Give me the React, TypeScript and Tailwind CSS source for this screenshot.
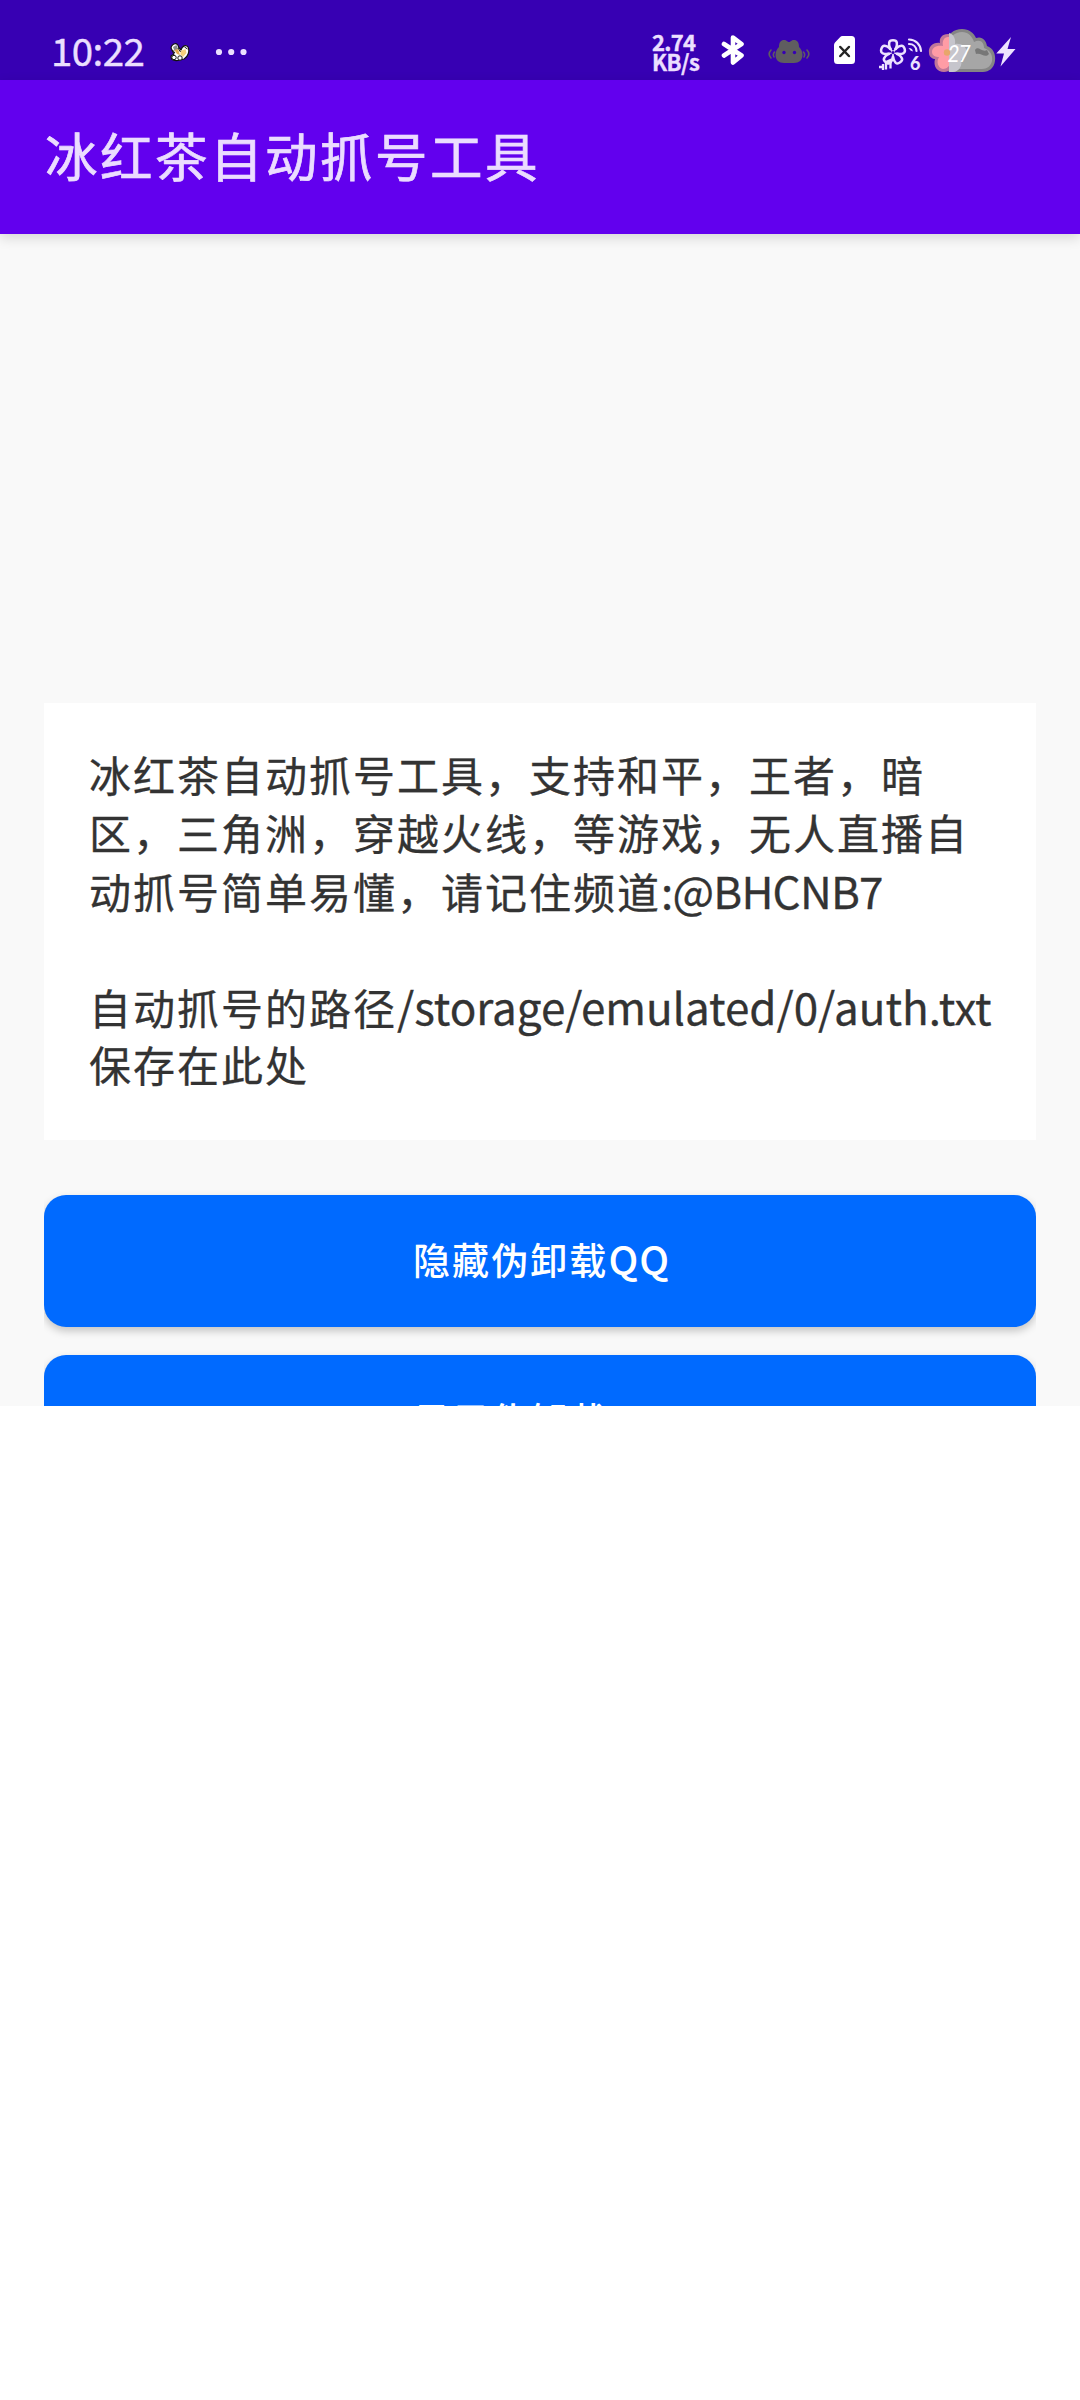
function NotificationIcon() {
  return (
    <svg width="20" height="20" viewBox="0 0 20 20" fill="none">
      <path
        d="M1 6C2 1 8 0 8.500 5L11 8C12 4 16 2 18 5C20 9 18 15 14 17L10 18C7 19 4 19 1.500 17L1 14L4 12Z"
        fill="#fff"
        stroke="#111"
        strokeWidth="1.2"
        strokeLinejoin="round"
      />
      <path d="M3 5L6.500 3L8 7L4.500 9Z" fill="#8b8b8b" />
      <path d="M4.500 8L8 7L10 13L7 12Z" fill="#e2a94f" />
      <path d="M10.500 9L15.500 7L16.500 11L13 15L10.500 12.500Z" fill="#f5cf7c" />
      <path d="M2.500 8L5 11M8 6L10.500 10M14.500 5L17.500 7" stroke="#171717" strokeWidth="1" />
      <circle cx="4" cy="15.5" r="2.2" fill="#fff" stroke="#171717" strokeWidth="1" />
      <circle cx="10" cy="16" r="2.2" fill="#fff" stroke="#171717" strokeWidth="1" />
    </svg>
  );
}

function DotsIcon() {
  return (
    <svg width="32" height="8" viewBox="0 0 32 8" fill="#ebdfff">
      <circle cx="4" cy="4" r="3.1" />
      <circle cx="16.2" cy="4" r="3.1" />
      <circle cx="28.5" cy="4" r="3.1" />
    </svg>
  );
}

function BluetoothIcon() {
  return (
    <svg width="24" height="32" viewBox="0 0 24 32" fill="none">
      <path
        d="M3 10L20.5 21.5L12 28.5V3.5L20.5 10L3 21.5"
        stroke="#fff"
        strokeWidth="4.6"
        strokeLinecap="round"
        strokeLinejoin="round"
      />
    </svg>
  );
}

function CatIcon() {
  return (
    <svg width="42" height="26" viewBox="0 0 42 26" fill="none">
      <path
        d="M11 8C11 3 13 1 16 1C19 1 19 3 21 3C23 3 23 1 26 1C29 1 31 3 31 8C33 10 34.5 12.5 34.5 16C34.5 21 31 24 26 24H16C11 24 7.5 21 7.5 16C7.5 12.5 9 10 11 8Z"
        fill="#5f5d60"
      />
      <circle cx="16" cy="13.5" r="1.7" fill="#3700b3" />
      <circle cx="26.5" cy="13.5" r="1.7" fill="#3700b3" />
      <path
        d="M3 11C.7 13.5 .7 16.5 3 19M6.5 13C5 14.5 5 16 6 18M39 11C41.3 13.5 41.3 16.5 39 19M35.5 13C37 14.5 37 16 36 18"
        stroke="#5f5d60"
        strokeWidth="1.6"
        strokeLinecap="round"
      />
    </svg>
  );
}

function SimIcon() {
  return (
    <svg width="21" height="28" viewBox="0 0 21 28" fill="none">
      <path d="M8.5 0H17.5Q21 0 21 3.5V24.5Q21 28 17.5 28H3.5Q0 28 0 24.5V9Q0 7.5 1 6.5L6 1.2Q7 0 8.5 0Z" fill="#fff" />
      <path d="M6.3 11L14.9 20M14.9 11L6.3 20" stroke="#242424" strokeWidth="2.5" strokeLinecap="round" />
    </svg>
  );
}

function SignalIcon() {
  const petals = [0, 72, 144, 216, 288];
  return (
    <svg width="44" height="40" viewBox="0 0 44 40" fill="none">
      {petals.map(a => (
        <path
          key={a}
          transform={`rotate(${a} 14 15.5)`}
          d="M14 14.5C10.5 11.5 9.8 8 10.2 5.5C10.8 2.6 17.2 2.6 17.8 5.5C18.2 8 17.500 11.500 14 14.500Z"
          stroke="#ede2ff"
          strokeWidth="2.5"
        />
      ))}
      {petals.map(a => (
        <path key={a} transform={`rotate(${a} 14 15.5)`} d="M14 12.5V8" stroke="#3700b3" strokeWidth="2.2" strokeLinecap="round" />
      ))}
      <circle cx="14" cy="15.5" r="1.6" fill="#3700b3" />
      <path d="M0 30H4V27M4 30V33M7 32.500V25L11.500 23V31.500M7 27L12 25" stroke="#ede2ff" strokeWidth="2.3" />
      <path
        d="M30 2.5C36.5 2.5 41.5 7.5 42 14M30 7C34.3 7 37.3 10 37.5 14"
        stroke="#ede2ff"
        strokeWidth="2.2"
        strokeLinecap="round"
      />
      <path d="M29.5 11C32.5 11 33.8 12.5 33.8 14.5L31.5 13.5Z" fill="#ede2ff" />
      <text x="31" y="32.8" fill="#ede2ff" fontSize="18" fontWeight="900" fontFamily="Lato, sans-serif">
        6
      </text>
    </svg>
  );
}

function BatteryIcon() {
  return (
    <svg width="68" height="46" viewBox="0 0 68 46" fill="none">
      <path
        d="M18 15C19 6 26 1 34 1C41 1 46 5 48 10C54 8 58 12 59 18C65 20 68 26 67 33C66 40 61 44 55 44H24C17 44 13 38 15 31Z"
        fill="#858585"
      />
      <path
        d="M20 17C21 9 27 4 34 4C40 4 44 8 46 14C52 11 56 14 56 20C62 22 65 27 64 33C63 38 59 41 54 41H25C19 41 16 37 18 31Z"
        fill="#a6a6a6"
      />
      <path d="M20 6C14 6 11 10 12 15C5 14 0 19 1 25C1 29 5 31 7 31C5 38 9 44 16 44C19 44 21 43 22 41V6Z" fill="#c17898" />
      <path d="M20 9C16 9 14 13 15 18C8 17 4 20 4 24C4 28 8 29 11 29C8 34 10 40 15 41C19 41 21 38 22 36V9Z" fill="#ff9ca5" />
      <path d="M21 5C25 6 28 10 27 16C33 15 38 18 39 24C39 28 36 31 33 31C35 37 31 44 25 44H21Z" fill="#c6c5cc" />
      <circle cx="19" cy="24.5" r="3.2" fill="#e8a66a" />
      <path d="M47 22C50 17 54 25 59 22L61 26C57 31 53 24 48 26Z" fill="#777" />
      <text
        x="20"
        y="33.5"
        fill="#fff"
        fontSize="23.5"
        fontStyle="italic"
        textLength="22"
        lengthAdjust="spacingAndGlyphs"
        fontFamily="Roboto, sans-serif"
      >
        27
      </text>
    </svg>
  );
}

function BoltIcon() {
  return (
    <svg width="20" height="30" viewBox="0 0 20 30" fill="#ede2ff">
      <path d="M15 0L.3 16.5H8L4.5 29.5L19.5 12H11.5Z" />
    </svg>
  );
}

function StatusBar() {
  return (
    <div className="h-20 bg-[#3700b3] flex items-start text-[#ebdfff]">
      <div className="ml-[51px] mt-[29px] w-[119px] text-[38.5px] leading-[40px] tracking-[-0.6px] [-webkit-text-stroke:0.4px]">
        10:22
      </div>
      <div className="mt-[42px]">
        <NotificationIcon />
      </div>
      <div className="ml-[25px] mt-[48px]">
        <DotsIcon />
      </div>
      <div className="ml-[405px] mt-[32px] w-[69px] text-[22px] leading-[19.5px] font-bold [-webkit-text-stroke:0.4px]">
        <div className="tracking-[-0.7px]">2.74</div>
        <div className="tracking-[-0.5px]">KB/s</div>
      </div>
      <div className="mt-[34px]">
        <BluetoothIcon />
      </div>
      <div className="ml-[23px] mt-[39px]">
        <CatIcon />
      </div>
      <div className="ml-[24px] mt-[36px]">
        <SimIcon />
      </div>
      <div className="ml-[24px] mt-[37px]">
        <SignalIcon />
      </div>
      <div className="ml-[5px] mt-[28px]">
        <BatteryIcon />
      </div>
      <div className="mt-[37px]">
        <BoltIcon />
      </div>
    </div>
  );
}

function ActionButton({ label, app }: { label: string; app: string }) {
  return (
    <button className="w-full h-[132px] shrink-0 rounded-[22px] bg-[#006aff] text-white text-[37px] leading-[60px] pb-[5px] pl-[3px] font-medium tracking-[2.1px] shadow-[0_4px_8px_rgba(0,0,0,0.22)]">
      {label}
      <span className="text-[39.5px] tracking-[1px]">{app}</span>
    </button>
  );
}

export default function App() {
  return (
    <div className="w-[1080px] h-[2400px] bg-white overflow-hidden font-['Noto_Sans_CJK_SC',sans-serif]">
      <StatusBar />
      <header className="relative h-[154px] bg-[#6200ee] pl-[45px] pb-[7px] flex items-center shadow-[0_4px_12px_rgba(0,0,0,0.14)]">
        <h1 className="text-[52.5px] leading-[80px] tracking-[2.5px] text-[#ebdcff] [-webkit-text-stroke:0.7px]">
          冰红茶自动抓号工具
        </h1>
      </header>

      <main className="h-[1172px] bg-[#f9f9f9] px-11 pt-[469px] overflow-hidden">
        <div className="h-[437px] bg-white pt-[42px] pl-[45px] text-[42px] leading-[58px] tracking-[2px] text-[#333] whitespace-nowrap [-webkit-text-stroke:0.3px]">
          <p className="h-[58px]">冰红茶自动抓号工具，支持和平，王者，暗</p>
          <p className="h-[58px]">区，三角洲，穿越火线，等游戏，无人直播自</p>
          <p className="h-[58px]">
            动抓号简单易懂，请记住频道<span className="text-[44px] tracking-[-0.8px]">:@BHCNB7</span>
          </p>
          <p className="mt-[58px] h-[58px]">
            自动抓号的路径<span className="text-[44px] tracking-[-0.05px]">/storage/emulated/0/auth.txt</span>
          </p>
          <p className="h-[58px]">保存在此处</p>
        </div>

        <div className="pt-[55px] flex flex-col gap-[28px] overflow-hidden">
          <ActionButton label="隐藏伪卸载" app="QQ" />
          <ActionButton label="显示伪卸载" app="QQ" />
        </div>
      </main>
    </div>
  );
}
